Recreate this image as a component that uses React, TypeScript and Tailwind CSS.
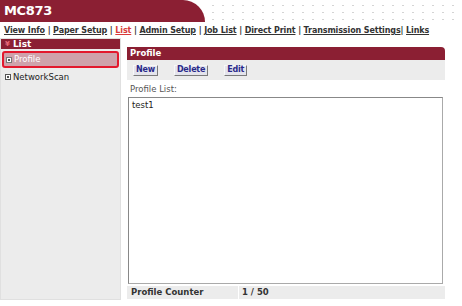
const navItems = [
  "View Info",
  "Paper Setup",
  "List",
  "Admin Setup",
  "Job List",
  "Direct Print",
  "Transmission Settings",
  "Links",
];

function Button({ label }: { label: string }) {
  return (
    <button className="h-[11px] px-[2px] bg-[#e4e4ec] border border-[#f8f8f8] border-r-[#7a7a7a] border-b-[#7a7a7a] text-[8px] font-bold text-[#2a2a8a] leading-none tracking-[-0.2px]">
      {label}
    </button>
  );
}

export default function App() {
  return (
    <div
      className="w-[462px] h-[306px] bg-white overflow-hidden text-[#333]"
      style={{ fontFamily: '"DejaVu Sans", Verdana, sans-serif' }}
    >
      {/* header */}
      <div className="flex h-[22px]">
        <div className="w-[205px] bg-[#8b1f33] rounded-tr-[22px] flex items-center pl-[4px]">
          <span className="text-white font-bold text-[13px] tracking-tight">MC873</span>
        </div>
        <div className="flex-1 bg-[radial-gradient(#d4d4d4_1px,transparent_1px)] bg-[length:10px_7px] bg-[position:3px_2px]" />
      </div>

      {/* nav */}
      <div className="h-[16px] pl-[4px] pt-[3px] text-[8px] font-bold text-[#333] whitespace-nowrap tracking-[-0.12px]">
        {navItems.map((n, i) => (
          <span key={n}>
            <span className={`underline ${n === "List" ? "text-[#d93a3a]" : ""}`}>{n}</span>
            {i < navItems.length - 1 && (n === "Transmission Settings" ? "| " : " | ")}
          </span>
        ))}
      </div>

      <div className="flex gap-[6px]">
        {/* sidebar */}
        <div className="w-[121px] h-[262px] bg-[#ececec] border border-[#e0e0e0] flex flex-col">
          <div className="h-[10px] bg-[#8b1f33] flex items-center pl-[4px] gap-[3px]">
            <span className="text-[#e86a7a] text-[7px] font-bold leading-none">¥</span>
            <span className="text-white text-[9px] font-bold leading-none">List</span>
          </div>
          <div className="mx-[1px] mt-[2px] h-[17px] rounded-[3px] border-2 border-[#e3182d] bg-[#cfa2ab] flex items-center pl-[2px] gap-[2px]">
            <span className="w-[6px] h-[6px] border border-[#777] bg-white flex items-center justify-center">
              <span className="w-[2px] h-[2px] bg-[#555]" />
            </span>
            <span className="text-white text-[8.5px]">Profile</span>
          </div>
          <div className="h-[14px] flex items-center pl-[4px] gap-[2px] mt-[2px]">
            <span className="w-[6px] h-[6px] border border-[#555] bg-white flex items-center justify-center">
              <span className="w-[2px] h-[2px] bg-[#555]" />
            </span>
            <span className="text-[#222] text-[8.5px]">NetworkScan</span>
          </div>
        </div>

        {/* main */}
        <div className="w-[318px] pt-[9px] flex flex-col">
          <div className="h-[13px] bg-[#8b1f33] rounded-tr-[4px] flex items-center pl-[3px]">
            <span className="text-white text-[8.5px] font-bold">Profile</span>
          </div>
          <div className="h-[20px] bg-[#ececec] flex items-center pl-[6px] gap-[16px]">
            <Button label="New" />
            <Button label="Delete" />
            <Button label="Edit" />
          </div>
          <div className="text-[8.5px] text-[#555] pl-[3px] mt-[5px] leading-none">Profile List:</div>
          <div className="mx-[1px] mt-[3px] w-[315px] h-[187px] border border-[#aaa] border-t-[#888] border-l-[#888] bg-white px-[3px] pt-[3px]">
            <div className="text-[8.5px] text-[#222] leading-none">test1</div>
          </div>
          <div className="h-[13px] mt-[2px] flex text-[8.5px] font-bold text-[#333]">
            <div className="w-[111px] bg-[#ececec] flex items-center pl-[4px]">Profile Counter</div>
            <div className="flex-1 ml-[1px] bg-[#ececec] flex items-center pl-[3px]">1 / 50</div>
          </div>
        </div>
      </div>
    </div>
  );
}
